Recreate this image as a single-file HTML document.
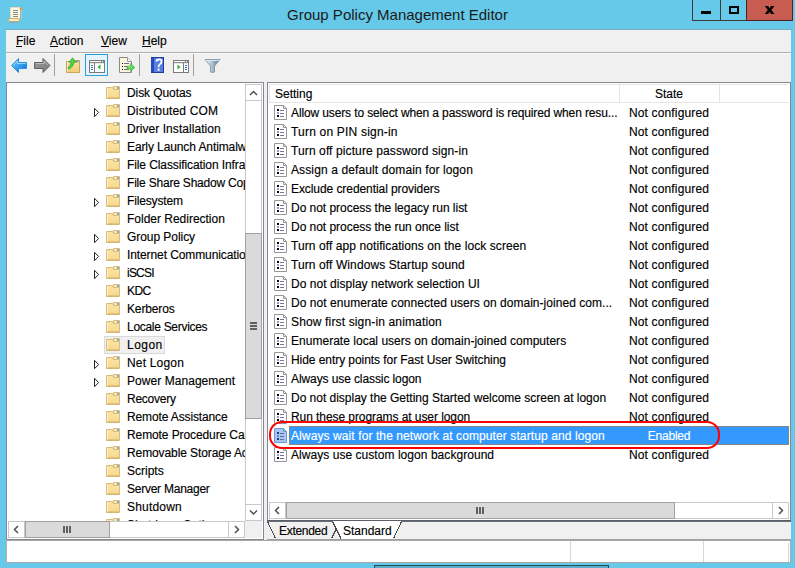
<!DOCTYPE html>
<html><head><meta charset="utf-8">
<style>
*{margin:0;padding:0;box-sizing:border-box}
html,body{width:795px;height:568px;overflow:hidden}
body{background:#67c9e9;position:relative;font-family:"Liberation Sans",sans-serif;font-size:12px;color:#000;-webkit-text-stroke:0.15px}
.a{position:absolute}
.t{position:absolute;white-space:nowrap;line-height:18px;height:18px}
.r{position:absolute;white-space:nowrap;line-height:19px;height:19px}
svg{position:absolute;overflow:visible}
</style></head><body>

<svg style="left:0;top:0" width="30" height="28" viewBox="0 0 30 28">
  <path d="M10.5 7.5 h9.5 l1 1 v10 h-10.5 z" fill="#fdf8e2" stroke="#e6dcc0"/>
  <path d="M20.5 8.5 v10.5" stroke="#a8a8a8"/>
  <circle cx="21" cy="9" r="1.4" fill="#d8a040"/>
  <rect x="13" y="10" width="5" height="1" fill="#8a8a98"/>
  <rect x="13" y="12" width="5" height="1" fill="#8a8a98"/>
  <rect x="13" y="14" width="5" height="1" fill="#8a8a98"/>
  <rect x="13" y="16" width="5" height="1" fill="#8a8a98"/>
  <rect x="8.5" y="18.5" width="11" height="3" rx="1.5" fill="#faf0c8" stroke="#d0b068"/>
  <path d="M9 22 h10" stroke="#a0a0a0"/>
</svg>
<div class="a" style="left:0;top:5px;width:795px;text-align:center;font-size:15px;line-height:20px;height:20px;color:#1a1a1a;white-space:nowrap;-webkit-text-stroke:0">Group Policy Management Editor</div>

<div class="a" style="left:692px;top:0;width:29px;height:21px;border:1px solid #3a3a3a;border-top:none"></div>
<div class="a" style="left:701px;top:11px;width:10px;height:3px;background:#000"></div>
<div class="a" style="left:720px;top:0;width:27px;height:21px;border-bottom:1px solid #3a3a3a"></div>
<div class="a" style="left:729px;top:6px;width:10px;height:8px;border:2px solid #000"></div>
<div class="a" style="left:746px;top:0;width:47px;height:21px;border:1px solid #4a2420;border-top:none;background:#c75c50"></div>
<svg style="left:0;top:0" width="795" height="30" viewBox="0 0 795 30"><path d="M764.8 6 H768.2 L769.6 8.3 L771 6 H774.4 L771.4 10 L774.4 14 H771 L769.6 11.7 L768.2 14 H764.8 L767.8 10 Z" fill="#000"/></svg>

<div class="a" style="left:5px;top:29px;width:787px;height:1px;background:#7aaac4"></div>
<div class="a" style="left:6px;top:30px;width:785px;height:533px;background:#f0f0f0"></div>
<div class="t" style="left:16px;top:32px">File</div>
<div class="a" style="left:16px;top:46px;width:6px;height:1px;background:#000"></div>
<div class="t" style="left:50px;top:32px">Action</div>
<div class="a" style="left:50px;top:46px;width:8px;height:1px;background:#000"></div>
<div class="t" style="left:101px;top:32px">View</div>
<div class="a" style="left:101px;top:46px;width:8px;height:1px;background:#000"></div>
<div class="t" style="left:142px;top:32px">Help</div>
<div class="a" style="left:142px;top:46px;width:9px;height:1px;background:#000"></div>
<div class="a" style="left:6px;top:52px;width:785px;height:1px;background:#b0b0b0"></div>
<div class="a" style="left:6px;top:53px;width:785px;height:1px;background:#fafbfd"></div>
<div class="a" style="left:54px;top:54px;width:1px;height:22px;background:#a0a0a0"></div>
<div class="a" style="left:139px;top:54px;width:1px;height:22px;background:#a0a0a0"></div>
<div class="a" style="left:193px;top:54px;width:1px;height:22px;background:#a0a0a0"></div>
<svg style="left:0;top:0" width="230" height="82" viewBox="0 0 230 82">
<defs>
 <linearGradient id="gb" x1="0" y1="0" x2="1" y2="1"><stop offset="0" stop-color="#7ad4ff"/><stop offset="0.6" stop-color="#2a9ae8"/><stop offset="1" stop-color="#0c6ad8"/></linearGradient>
 <linearGradient id="gg" x1="0" y1="0" x2="1" y2="1"><stop offset="0" stop-color="#9a9a9a"/><stop offset="1" stop-color="#7a7a7a"/></linearGradient>
 <linearGradient id="gf" x1="0" y1="0" x2="0" y2="1"><stop offset="0" stop-color="#f8e2a0"/><stop offset="1" stop-color="#f0cc78"/></linearGradient>
 <linearGradient id="gfun" x1="0" y1="0" x2="1" y2="0"><stop offset="0" stop-color="#eef3f8"/><stop offset="0.45" stop-color="#b4c4d2"/><stop offset="1" stop-color="#4e6a80"/></linearGradient>
</defs>
<path d="M11.5 65.5 L18.5 58.5 V62.5 H26.5 V68.5 H18.5 V72.5 Z" fill="url(#gb)" stroke="#2c8edc" stroke-linejoin="round"/><path d="M13.2 65.5 L17.5 61 V63.5 H25.5" fill="none" stroke="#a8e2ff" stroke-width="0.8"/>
<path d="M50 65.5 L43 58.5 V62.5 H34.5 V68.5 H43 V72.5 Z" fill="url(#gg)" stroke="#606060" stroke-linejoin="round"/><path d="M48.3 65.5 L44 61 V63.5 H35.5" fill="none" stroke="#c8c8c8" stroke-width="0.8"/>
<!-- up folder -->
<path d="M66.5 61.5 h7 l1 -1 h5 v12 h-13 z" fill="url(#gf)" stroke="#c9a458"/>
<path d="M67.5 62.5 v9" stroke="#fff3c4"/>
<rect x="76" y="61" width="2.5" height="1.2" fill="#4a98f0"/>
<path d="M72.5 57.8 L76 62.2 H74 C73.6 65.2 71.6 67.8 68.8 69.2 L67.8 67.6 C69.8 66.4 71 64.6 71.2 62.2 H69 Z" fill="#48d848" stroke="#2e9e2e" stroke-width="0.7" stroke-linejoin="round"/>
<!-- highlighted button -->
<rect x="85.5" y="54.5" width="22" height="21" fill="#e5f3ff" stroke="#26a0da"/>
<rect x="89.5" y="60.5" width="15" height="12" fill="#fff" stroke="#7a7a7a"/>
<rect x="90" y="61" width="14" height="1" fill="#fff"/>
<rect x="90" y="62" width="14" height="1" fill="#8a8a8a"/>
<rect x="101" y="61" width="1" height="1" fill="#7a7a7a"/><rect x="103" y="61" width="1" height="1" fill="#7a7a7a"/>
<rect x="90" y="63" width="14" height="1" fill="#e8e8e8"/>
<rect x="94" y="63" width="1" height="9" fill="#7a7a7a"/>
<rect x="91" y="65" width="2" height="1" fill="#3070c8"/><rect x="91" y="67" width="2" height="1" fill="#3070c8"/><rect x="91" y="69" width="2" height="1" fill="#3070c8"/>
<path d="M97.5 67 L100.5 64.5 V69.5 Z" fill="#30b030"/>
<!-- export list -->
<path d="M119.5 57.5 h8 l4 4 v11 h-12 z" fill="#fdf6dc" stroke="#8a8a8a"/><path d="M127.5 57.5 v4 h4" fill="#fff" stroke="#9a9a9a"/>
<rect x="122" y="63" width="1" height="1" fill="#000"/><rect x="122" y="66" width="1" height="1" fill="#000"/><rect x="122" y="69" width="1" height="1" fill="#000"/>
<rect x="124" y="63" width="5" height="1" fill="#6a6aa0"/><rect x="124" y="66" width="5" height="1" fill="#6a6aa0"/><rect x="124" y="69" width="5" height="1" fill="#6a6aa0"/>
<path d="M127 66 h3.5 v-2.6 l4.4 4 l-4.4 4 v-2.6 h-3.5 z" fill="#52d452" stroke="#36b036" stroke-width="0.6"/><path d="M128 67 h4" stroke="#a8f0a8" stroke-width="0.8"/>
<!-- help -->
<rect x="151" y="57" width="13" height="16" fill="#1e3c9e"/>
<rect x="151" y="58" width="3" height="14" fill="#2848c0"/>
<rect x="154" y="58" width="9" height="14" fill="#5a7ee0"/>
<path d="M156.4 61.6 Q156.6 59.3 159 59.3 Q161.6 59.3 161.6 61.6 Q161.6 63.2 159.8 64.4 Q158.6 65.3 158.6 67.2" fill="none" stroke="#fff" stroke-width="1.7"/>
<rect x="157.6" y="68.6" width="2" height="2" fill="#fff"/>
<!-- action pane -->
<rect x="173.5" y="60.5" width="15" height="12" fill="#fff" stroke="#7a7a7a"/>
<rect x="174" y="62" width="14" height="1" fill="#8a8a8a"/>
<rect x="185" y="61" width="1" height="1" fill="#7a7a7a"/><rect x="187" y="61" width="1" height="1" fill="#7a7a7a"/>
<rect x="174" y="63" width="14" height="1" fill="#e8e8e8"/>
<rect x="183" y="63" width="1" height="9" fill="#7a7a7a"/>
<rect x="185" y="65" width="2" height="1" fill="#3070c8"/><rect x="185" y="67" width="2" height="1" fill="#3070c8"/><rect x="185" y="69" width="2" height="1" fill="#3070c8"/>
<path d="M177.5 64.5 L180.5 67 L177.5 69.5 Z" fill="#30b030"/>
<!-- filter -->
<path d="M205 59.5 H220 L214.5 66 V72 Q212.5 73 210.5 72 V66 Z" fill="url(#gfun)" stroke="#7890a4" stroke-width="0.8"/><path d="M206 60.5 H219" stroke="#dce6ee" stroke-width="1"/>
</svg>

<div class="a" style="left:6px;top:82px;width:258px;height:458px;border:1px solid #828790;background:#fff"></div>
<svg width="0" height="0" style="left:0;top:0"><defs><linearGradient id="fld" x1="0" y1="0" x2="0" y2="1"><stop offset="0" stop-color="#fbe6a6"/><stop offset="1" stop-color="#f5d78e"/></linearGradient></defs></svg>
<div class="a" style="left:8px;top:84px;width:237px;height:437px;overflow:hidden">
<svg style="left:98px;top:2px" width="14" height="13" viewBox="0 0 14 13"><path d="M0.5 1.5 H6.5 L7.5 3.5 H13.5 V12.5 H0.5 Z" fill="url(#fld)" stroke="#dcbd78"/><path d="M7.5 0.5 H13.5 V3.5 H7.5 Z" fill="#f6d98a" stroke="#dcbd78"/><rect x="8.5" y="1.3" width="2.5" height="1.4" fill="#fffbea"/><rect x="10.8" y="1.3" width="2" height="1.4" fill="#4a94ec"/><path d="M1 12 H13" stroke="#cfae68"/><path d="M1.5 2.5 V11.5" stroke="#fff2c8" stroke-width="1"/></svg>
<div class="t" style="left:119px;top:0px;letter-spacing:-0.080px">Disk Quotas</div>
<svg style="left:86px;top:24px" width="6" height="10" viewBox="0 0 6 10"><path d="M0.5 0.3 V8.7 L4.6 4.5 Z" fill="#fff" stroke="#262626" stroke-width="1"/></svg>
<svg style="left:98px;top:20px" width="14" height="13" viewBox="0 0 14 13"><path d="M0.5 1.5 H6.5 L7.5 3.5 H13.5 V12.5 H0.5 Z" fill="url(#fld)" stroke="#dcbd78"/><path d="M7.5 0.5 H13.5 V3.5 H7.5 Z" fill="#f6d98a" stroke="#dcbd78"/><rect x="8.5" y="1.3" width="2.5" height="1.4" fill="#fffbea"/><rect x="10.8" y="1.3" width="2" height="1.4" fill="#4a94ec"/><path d="M1 12 H13" stroke="#cfae68"/><path d="M1.5 2.5 V11.5" stroke="#fff2c8" stroke-width="1"/></svg>
<div class="t" style="left:119px;top:18px;letter-spacing:0.164px">Distributed COM</div>
<svg style="left:98px;top:38px" width="14" height="13" viewBox="0 0 14 13"><path d="M0.5 1.5 H6.5 L7.5 3.5 H13.5 V12.5 H0.5 Z" fill="url(#fld)" stroke="#dcbd78"/><path d="M7.5 0.5 H13.5 V3.5 H7.5 Z" fill="#f6d98a" stroke="#dcbd78"/><rect x="8.5" y="1.3" width="2.5" height="1.4" fill="#fffbea"/><rect x="10.8" y="1.3" width="2" height="1.4" fill="#4a94ec"/><path d="M1 12 H13" stroke="#cfae68"/><path d="M1.5 2.5 V11.5" stroke="#fff2c8" stroke-width="1"/></svg>
<div class="t" style="left:119px;top:36px;letter-spacing:0.056px">Driver Installation</div>
<svg style="left:98px;top:56px" width="14" height="13" viewBox="0 0 14 13"><path d="M0.5 1.5 H6.5 L7.5 3.5 H13.5 V12.5 H0.5 Z" fill="url(#fld)" stroke="#dcbd78"/><path d="M7.5 0.5 H13.5 V3.5 H7.5 Z" fill="#f6d98a" stroke="#dcbd78"/><rect x="8.5" y="1.3" width="2.5" height="1.4" fill="#fffbea"/><rect x="10.8" y="1.3" width="2" height="1.4" fill="#4a94ec"/><path d="M1 12 H13" stroke="#cfae68"/><path d="M1.5 2.5 V11.5" stroke="#fff2c8" stroke-width="1"/></svg>
<div class="t" style="left:119px;top:54px;letter-spacing:-0.100px">Early Launch Antimalware</div>
<svg style="left:98px;top:74px" width="14" height="13" viewBox="0 0 14 13"><path d="M0.5 1.5 H6.5 L7.5 3.5 H13.5 V12.5 H0.5 Z" fill="url(#fld)" stroke="#dcbd78"/><path d="M7.5 0.5 H13.5 V3.5 H7.5 Z" fill="#f6d98a" stroke="#dcbd78"/><rect x="8.5" y="1.3" width="2.5" height="1.4" fill="#fffbea"/><rect x="10.8" y="1.3" width="2" height="1.4" fill="#4a94ec"/><path d="M1 12 H13" stroke="#cfae68"/><path d="M1.5 2.5 V11.5" stroke="#fff2c8" stroke-width="1"/></svg>
<div class="t" style="left:119px;top:72px;letter-spacing:-0.100px">File Classification Infrastructure</div>
<svg style="left:98px;top:92px" width="14" height="13" viewBox="0 0 14 13"><path d="M0.5 1.5 H6.5 L7.5 3.5 H13.5 V12.5 H0.5 Z" fill="url(#fld)" stroke="#dcbd78"/><path d="M7.5 0.5 H13.5 V3.5 H7.5 Z" fill="#f6d98a" stroke="#dcbd78"/><rect x="8.5" y="1.3" width="2.5" height="1.4" fill="#fffbea"/><rect x="10.8" y="1.3" width="2" height="1.4" fill="#4a94ec"/><path d="M1 12 H13" stroke="#cfae68"/><path d="M1.5 2.5 V11.5" stroke="#fff2c8" stroke-width="1"/></svg>
<div class="t" style="left:119px;top:90px;letter-spacing:-0.200px">File Share Shadow Copy Provider</div>
<svg style="left:86px;top:114px" width="6" height="10" viewBox="0 0 6 10"><path d="M0.5 0.3 V8.7 L4.6 4.5 Z" fill="#fff" stroke="#262626" stroke-width="1"/></svg>
<svg style="left:98px;top:110px" width="14" height="13" viewBox="0 0 14 13"><path d="M0.5 1.5 H6.5 L7.5 3.5 H13.5 V12.5 H0.5 Z" fill="url(#fld)" stroke="#dcbd78"/><path d="M7.5 0.5 H13.5 V3.5 H7.5 Z" fill="#f6d98a" stroke="#dcbd78"/><rect x="8.5" y="1.3" width="2.5" height="1.4" fill="#fffbea"/><rect x="10.8" y="1.3" width="2" height="1.4" fill="#4a94ec"/><path d="M1 12 H13" stroke="#cfae68"/><path d="M1.5 2.5 V11.5" stroke="#fff2c8" stroke-width="1"/></svg>
<div class="t" style="left:119px;top:108px;letter-spacing:-0.144px">Filesystem</div>
<svg style="left:98px;top:128px" width="14" height="13" viewBox="0 0 14 13"><path d="M0.5 1.5 H6.5 L7.5 3.5 H13.5 V12.5 H0.5 Z" fill="url(#fld)" stroke="#dcbd78"/><path d="M7.5 0.5 H13.5 V3.5 H7.5 Z" fill="#f6d98a" stroke="#dcbd78"/><rect x="8.5" y="1.3" width="2.5" height="1.4" fill="#fffbea"/><rect x="10.8" y="1.3" width="2" height="1.4" fill="#4a94ec"/><path d="M1 12 H13" stroke="#cfae68"/><path d="M1.5 2.5 V11.5" stroke="#fff2c8" stroke-width="1"/></svg>
<div class="t" style="left:119px;top:126px;letter-spacing:-0.012px">Folder Redirection</div>
<svg style="left:86px;top:150px" width="6" height="10" viewBox="0 0 6 10"><path d="M0.5 0.3 V8.7 L4.6 4.5 Z" fill="#fff" stroke="#262626" stroke-width="1"/></svg>
<svg style="left:98px;top:146px" width="14" height="13" viewBox="0 0 14 13"><path d="M0.5 1.5 H6.5 L7.5 3.5 H13.5 V12.5 H0.5 Z" fill="url(#fld)" stroke="#dcbd78"/><path d="M7.5 0.5 H13.5 V3.5 H7.5 Z" fill="#f6d98a" stroke="#dcbd78"/><rect x="8.5" y="1.3" width="2.5" height="1.4" fill="#fffbea"/><rect x="10.8" y="1.3" width="2" height="1.4" fill="#4a94ec"/><path d="M1 12 H13" stroke="#cfae68"/><path d="M1.5 2.5 V11.5" stroke="#fff2c8" stroke-width="1"/></svg>
<div class="t" style="left:119px;top:144px;letter-spacing:-0.055px">Group Policy</div>
<svg style="left:86px;top:168px" width="6" height="10" viewBox="0 0 6 10"><path d="M0.5 0.3 V8.7 L4.6 4.5 Z" fill="#fff" stroke="#262626" stroke-width="1"/></svg>
<svg style="left:98px;top:164px" width="14" height="13" viewBox="0 0 14 13"><path d="M0.5 1.5 H6.5 L7.5 3.5 H13.5 V12.5 H0.5 Z" fill="url(#fld)" stroke="#dcbd78"/><path d="M7.5 0.5 H13.5 V3.5 H7.5 Z" fill="#f6d98a" stroke="#dcbd78"/><rect x="8.5" y="1.3" width="2.5" height="1.4" fill="#fffbea"/><rect x="10.8" y="1.3" width="2" height="1.4" fill="#4a94ec"/><path d="M1 12 H13" stroke="#cfae68"/><path d="M1.5 2.5 V11.5" stroke="#fff2c8" stroke-width="1"/></svg>
<div class="t" style="left:119px;top:162px;letter-spacing:-0.100px">Internet Communication Management</div>
<svg style="left:86px;top:186px" width="6" height="10" viewBox="0 0 6 10"><path d="M0.5 0.3 V8.7 L4.6 4.5 Z" fill="#fff" stroke="#262626" stroke-width="1"/></svg>
<svg style="left:98px;top:182px" width="14" height="13" viewBox="0 0 14 13"><path d="M0.5 1.5 H6.5 L7.5 3.5 H13.5 V12.5 H0.5 Z" fill="url(#fld)" stroke="#dcbd78"/><path d="M7.5 0.5 H13.5 V3.5 H7.5 Z" fill="#f6d98a" stroke="#dcbd78"/><rect x="8.5" y="1.3" width="2.5" height="1.4" fill="#fffbea"/><rect x="10.8" y="1.3" width="2" height="1.4" fill="#4a94ec"/><path d="M1 12 H13" stroke="#cfae68"/><path d="M1.5 2.5 V11.5" stroke="#fff2c8" stroke-width="1"/></svg>
<div class="t" style="left:119px;top:180px;letter-spacing:-0.775px">iSCSI</div>
<svg style="left:98px;top:200px" width="14" height="13" viewBox="0 0 14 13"><path d="M0.5 1.5 H6.5 L7.5 3.5 H13.5 V12.5 H0.5 Z" fill="url(#fld)" stroke="#dcbd78"/><path d="M7.5 0.5 H13.5 V3.5 H7.5 Z" fill="#f6d98a" stroke="#dcbd78"/><rect x="8.5" y="1.3" width="2.5" height="1.4" fill="#fffbea"/><rect x="10.8" y="1.3" width="2" height="1.4" fill="#4a94ec"/><path d="M1 12 H13" stroke="#cfae68"/><path d="M1.5 2.5 V11.5" stroke="#fff2c8" stroke-width="1"/></svg>
<div class="t" style="left:119px;top:198px;letter-spacing:-0.550px">KDC</div>
<svg style="left:98px;top:218px" width="14" height="13" viewBox="0 0 14 13"><path d="M0.5 1.5 H6.5 L7.5 3.5 H13.5 V12.5 H0.5 Z" fill="url(#fld)" stroke="#dcbd78"/><path d="M7.5 0.5 H13.5 V3.5 H7.5 Z" fill="#f6d98a" stroke="#dcbd78"/><rect x="8.5" y="1.3" width="2.5" height="1.4" fill="#fffbea"/><rect x="10.8" y="1.3" width="2" height="1.4" fill="#4a94ec"/><path d="M1 12 H13" stroke="#cfae68"/><path d="M1.5 2.5 V11.5" stroke="#fff2c8" stroke-width="1"/></svg>
<div class="t" style="left:119px;top:216px;letter-spacing:-0.143px">Kerberos</div>
<svg style="left:98px;top:236px" width="14" height="13" viewBox="0 0 14 13"><path d="M0.5 1.5 H6.5 L7.5 3.5 H13.5 V12.5 H0.5 Z" fill="url(#fld)" stroke="#dcbd78"/><path d="M7.5 0.5 H13.5 V3.5 H7.5 Z" fill="#f6d98a" stroke="#dcbd78"/><rect x="8.5" y="1.3" width="2.5" height="1.4" fill="#fffbea"/><rect x="10.8" y="1.3" width="2" height="1.4" fill="#4a94ec"/><path d="M1 12 H13" stroke="#cfae68"/><path d="M1.5 2.5 V11.5" stroke="#fff2c8" stroke-width="1"/></svg>
<div class="t" style="left:119px;top:234px;letter-spacing:-0.293px">Locale Services</div>
<div class="a" style="left:96px;top:252px;width:61px;height:18px;background:#f0f0f0;border:1px solid #dadada"></div>
<svg style="left:98px;top:254px" width="14" height="13" viewBox="0 0 14 13"><path d="M0.5 1.5 H6.5 L7.5 3.5 H13.5 V12.5 H0.5 Z" fill="url(#fld)" stroke="#dcbd78"/><path d="M7.5 0.5 H13.5 V3.5 H7.5 Z" fill="#f6d98a" stroke="#dcbd78"/><rect x="8.5" y="1.3" width="2.5" height="1.4" fill="#fffbea"/><rect x="10.8" y="1.3" width="2" height="1.4" fill="#4a94ec"/><path d="M1 12 H13" stroke="#cfae68"/><path d="M1.5 2.5 V11.5" stroke="#fff2c8" stroke-width="1"/></svg>
<div class="t" style="left:119px;top:252px;letter-spacing:0.475px">Logon</div>
<svg style="left:86px;top:276px" width="6" height="10" viewBox="0 0 6 10"><path d="M0.5 0.3 V8.7 L4.6 4.5 Z" fill="#fff" stroke="#262626" stroke-width="1"/></svg>
<svg style="left:98px;top:272px" width="14" height="13" viewBox="0 0 14 13"><path d="M0.5 1.5 H6.5 L7.5 3.5 H13.5 V12.5 H0.5 Z" fill="url(#fld)" stroke="#dcbd78"/><path d="M7.5 0.5 H13.5 V3.5 H7.5 Z" fill="#f6d98a" stroke="#dcbd78"/><rect x="8.5" y="1.3" width="2.5" height="1.4" fill="#fffbea"/><rect x="10.8" y="1.3" width="2" height="1.4" fill="#4a94ec"/><path d="M1 12 H13" stroke="#cfae68"/><path d="M1.5 2.5 V11.5" stroke="#fff2c8" stroke-width="1"/></svg>
<div class="t" style="left:119px;top:270px;letter-spacing:0.188px">Net Logon</div>
<svg style="left:86px;top:294px" width="6" height="10" viewBox="0 0 6 10"><path d="M0.5 0.3 V8.7 L4.6 4.5 Z" fill="#fff" stroke="#262626" stroke-width="1"/></svg>
<svg style="left:98px;top:290px" width="14" height="13" viewBox="0 0 14 13"><path d="M0.5 1.5 H6.5 L7.5 3.5 H13.5 V12.5 H0.5 Z" fill="url(#fld)" stroke="#dcbd78"/><path d="M7.5 0.5 H13.5 V3.5 H7.5 Z" fill="#f6d98a" stroke="#dcbd78"/><rect x="8.5" y="1.3" width="2.5" height="1.4" fill="#fffbea"/><rect x="10.8" y="1.3" width="2" height="1.4" fill="#4a94ec"/><path d="M1 12 H13" stroke="#cfae68"/><path d="M1.5 2.5 V11.5" stroke="#fff2c8" stroke-width="1"/></svg>
<div class="t" style="left:119px;top:288px;letter-spacing:0.053px">Power Management</div>
<svg style="left:98px;top:308px" width="14" height="13" viewBox="0 0 14 13"><path d="M0.5 1.5 H6.5 L7.5 3.5 H13.5 V12.5 H0.5 Z" fill="url(#fld)" stroke="#dcbd78"/><path d="M7.5 0.5 H13.5 V3.5 H7.5 Z" fill="#f6d98a" stroke="#dcbd78"/><rect x="8.5" y="1.3" width="2.5" height="1.4" fill="#fffbea"/><rect x="10.8" y="1.3" width="2" height="1.4" fill="#4a94ec"/><path d="M1 12 H13" stroke="#cfae68"/><path d="M1.5 2.5 V11.5" stroke="#fff2c8" stroke-width="1"/></svg>
<div class="t" style="left:119px;top:306px;letter-spacing:-0.243px">Recovery</div>
<svg style="left:98px;top:326px" width="14" height="13" viewBox="0 0 14 13"><path d="M0.5 1.5 H6.5 L7.5 3.5 H13.5 V12.5 H0.5 Z" fill="url(#fld)" stroke="#dcbd78"/><path d="M7.5 0.5 H13.5 V3.5 H7.5 Z" fill="#f6d98a" stroke="#dcbd78"/><rect x="8.5" y="1.3" width="2.5" height="1.4" fill="#fffbea"/><rect x="10.8" y="1.3" width="2" height="1.4" fill="#4a94ec"/><path d="M1 12 H13" stroke="#cfae68"/><path d="M1.5 2.5 V11.5" stroke="#fff2c8" stroke-width="1"/></svg>
<div class="t" style="left:119px;top:324px;letter-spacing:-0.131px">Remote Assistance</div>
<svg style="left:98px;top:344px" width="14" height="13" viewBox="0 0 14 13"><path d="M0.5 1.5 H6.5 L7.5 3.5 H13.5 V12.5 H0.5 Z" fill="url(#fld)" stroke="#dcbd78"/><path d="M7.5 0.5 H13.5 V3.5 H7.5 Z" fill="#f6d98a" stroke="#dcbd78"/><rect x="8.5" y="1.3" width="2.5" height="1.4" fill="#fffbea"/><rect x="10.8" y="1.3" width="2" height="1.4" fill="#4a94ec"/><path d="M1 12 H13" stroke="#cfae68"/><path d="M1.5 2.5 V11.5" stroke="#fff2c8" stroke-width="1"/></svg>
<div class="t" style="left:119px;top:342px;letter-spacing:-0.100px">Remote Procedure Call</div>
<svg style="left:98px;top:362px" width="14" height="13" viewBox="0 0 14 13"><path d="M0.5 1.5 H6.5 L7.5 3.5 H13.5 V12.5 H0.5 Z" fill="url(#fld)" stroke="#dcbd78"/><path d="M7.5 0.5 H13.5 V3.5 H7.5 Z" fill="#f6d98a" stroke="#dcbd78"/><rect x="8.5" y="1.3" width="2.5" height="1.4" fill="#fffbea"/><rect x="10.8" y="1.3" width="2" height="1.4" fill="#4a94ec"/><path d="M1 12 H13" stroke="#cfae68"/><path d="M1.5 2.5 V11.5" stroke="#fff2c8" stroke-width="1"/></svg>
<div class="t" style="left:119px;top:360px;letter-spacing:-0.100px">Removable Storage Access</div>
<svg style="left:98px;top:380px" width="14" height="13" viewBox="0 0 14 13"><path d="M0.5 1.5 H6.5 L7.5 3.5 H13.5 V12.5 H0.5 Z" fill="url(#fld)" stroke="#dcbd78"/><path d="M7.5 0.5 H13.5 V3.5 H7.5 Z" fill="#f6d98a" stroke="#dcbd78"/><rect x="8.5" y="1.3" width="2.5" height="1.4" fill="#fffbea"/><rect x="10.8" y="1.3" width="2" height="1.4" fill="#4a94ec"/><path d="M1 12 H13" stroke="#cfae68"/><path d="M1.5 2.5 V11.5" stroke="#fff2c8" stroke-width="1"/></svg>
<div class="t" style="left:119px;top:378px;letter-spacing:0.000px">Scripts</div>
<svg style="left:98px;top:398px" width="14" height="13" viewBox="0 0 14 13"><path d="M0.5 1.5 H6.5 L7.5 3.5 H13.5 V12.5 H0.5 Z" fill="url(#fld)" stroke="#dcbd78"/><path d="M7.5 0.5 H13.5 V3.5 H7.5 Z" fill="#f6d98a" stroke="#dcbd78"/><rect x="8.5" y="1.3" width="2.5" height="1.4" fill="#fffbea"/><rect x="10.8" y="1.3" width="2" height="1.4" fill="#4a94ec"/><path d="M1 12 H13" stroke="#cfae68"/><path d="M1.5 2.5 V11.5" stroke="#fff2c8" stroke-width="1"/></svg>
<div class="t" style="left:119px;top:396px;letter-spacing:-0.246px">Server Manager</div>
<svg style="left:98px;top:416px" width="14" height="13" viewBox="0 0 14 13"><path d="M0.5 1.5 H6.5 L7.5 3.5 H13.5 V12.5 H0.5 Z" fill="url(#fld)" stroke="#dcbd78"/><path d="M7.5 0.5 H13.5 V3.5 H7.5 Z" fill="#f6d98a" stroke="#dcbd78"/><rect x="8.5" y="1.3" width="2.5" height="1.4" fill="#fffbea"/><rect x="10.8" y="1.3" width="2" height="1.4" fill="#4a94ec"/><path d="M1 12 H13" stroke="#cfae68"/><path d="M1.5 2.5 V11.5" stroke="#fff2c8" stroke-width="1"/></svg>
<div class="t" style="left:119px;top:414px;letter-spacing:0.186px">Shutdown</div>
<svg style="left:98px;top:434px" width="14" height="13" viewBox="0 0 14 13"><path d="M0.5 1.5 H6.5 L7.5 3.5 H13.5 V12.5 H0.5 Z" fill="url(#fld)" stroke="#dcbd78"/><path d="M7.5 0.5 H13.5 V3.5 H7.5 Z" fill="#f6d98a" stroke="#dcbd78"/><rect x="8.5" y="1.3" width="2.5" height="1.4" fill="#fffbea"/><rect x="10.8" y="1.3" width="2" height="1.4" fill="#4a94ec"/><path d="M1 12 H13" stroke="#cfae68"/><path d="M1.5 2.5 V11.5" stroke="#fff2c8" stroke-width="1"/></svg>
<div class="t" style="left:119px;top:432px;letter-spacing:-0.100px">Shutdown Options</div>
</div>
<div class="a" style="left:245px;top:84px;width:17px;height:437px;background:#fff;border-left:1px solid #c8c8c8;border-right:1px solid #c8c8c8"></div>
<div class="a" style="left:245px;top:84px;width:17px;height:17px;border:1px solid #c8c8c8;background:#fff"></div>
<svg style="left:245px;top:84px" width="17" height="17" viewBox="0 0 17 17"><path d="M5 11 L8.5 7.5 L12 11" fill="none" stroke="#505050" stroke-width="1.5"/></svg>
<div class="a" style="left:245px;top:504px;width:17px;height:17px;border:1px solid #c8c8c8;background:#fff"></div>
<svg style="left:245px;top:504px" width="17" height="17" viewBox="0 0 17 17"><path d="M5 6.5 L8.5 10 L12 6.5" fill="none" stroke="#505050" stroke-width="1.5"/></svg>
<div class="a" style="left:245px;top:233px;width:17px;height:186px;border:1px solid #a0a0a0;background:#dadada"></div>
<div class="a" style="left:250px;top:322px;width:7px;height:2px;background:#606060"></div>
<div class="a" style="left:250px;top:325px;width:7px;height:2px;background:#606060"></div>
<div class="a" style="left:250px;top:328px;width:7px;height:2px;background:#606060"></div>
<div class="a" style="left:8px;top:521px;width:237px;height:17px;background:#fff;border-top:1px solid #c8c8c8;border-bottom:1px solid #c8c8c8"></div>
<div class="a" style="left:8px;top:521px;width:17px;height:17px;border:1px solid #c8c8c8;background:#fff"></div>
<svg style="left:8px;top:521px" width="17" height="17" viewBox="0 0 17 17"><path d="M10 5 L6.5 8.5 L10 12" fill="none" stroke="#505050" stroke-width="1.5"/></svg>
<div class="a" style="left:228px;top:521px;width:17px;height:17px;border:1px solid #c8c8c8;background:#fff"></div>
<svg style="left:228px;top:521px" width="17" height="17" viewBox="0 0 17 17"><path d="M7 5 L10.5 8.5 L7 12" fill="none" stroke="#505050" stroke-width="1.5"/></svg>
<div class="a" style="left:25px;top:521px;width:85px;height:17px;border:1px solid #a0a0a0;background:#dadada"></div>
<div class="a" style="left:63px;top:526px;width:2px;height:7px;background:#606060"></div>
<div class="a" style="left:66px;top:526px;width:2px;height:7px;background:#606060"></div>
<div class="a" style="left:69px;top:526px;width:2px;height:7px;background:#606060"></div>
<div class="a" style="left:245px;top:521px;width:17px;height:17px;background:#f0f0f0"></div>
<div class="a" style="left:267px;top:82px;width:524px;height:439px;border:1px solid #828790;background:#fff"></div>
<div class="a" style="left:269px;top:84px;width:520px;height:19px;border-top:1px solid #e5e5e5;border-left:1px solid #e5e5e5;border-bottom:1px solid #e5e5e5;background:#fff"></div>
<div class="a" style="left:619px;top:84px;width:1px;height:18px;background:#e5e5e5"></div>
<div class="a" style="left:719px;top:84px;width:1px;height:18px;background:#e5e5e5"></div>
<div class="t" style="left:275px;top:85px">Setting</div>
<div class="t" style="left:619px;top:85px;width:100px;text-align:center">State</div>
<svg style="left:274px;top:105px" width="13" height="15" viewBox="0 0 13 15"><path d="M0.5 0.5 h9 l3 3 v11 h-12 z" fill="#fff" stroke="#969696"/><path d="M9.5 0.5 v3 h3" fill="none" stroke="#969696"/><rect x="3" y="4" width="2" height="2" fill="#000"/><rect x="3" y="7" width="2" height="2" fill="#9a9ac0"/><rect x="3" y="10" width="2" height="2" fill="#000"/><rect x="6" y="5" width="4" height="1" fill="#7676a6"/><rect x="6" y="8" width="4" height="1" fill="#7676a6"/><rect x="6" y="11" width="4" height="1" fill="#7676a6"/></svg>
<div class="r" style="left:291px;top:104px;color:#000;letter-spacing:-0.126px">Allow users to select when a password is required when resu...</div>
<div class="r" style="left:619px;top:104px;width:100px;text-align:center;color:#000;letter-spacing:0.15px">Not configured</div>
<svg style="left:274px;top:124px" width="13" height="15" viewBox="0 0 13 15"><path d="M0.5 0.5 h9 l3 3 v11 h-12 z" fill="#fff" stroke="#969696"/><path d="M9.5 0.5 v3 h3" fill="none" stroke="#969696"/><rect x="3" y="4" width="2" height="2" fill="#000"/><rect x="3" y="7" width="2" height="2" fill="#9a9ac0"/><rect x="3" y="10" width="2" height="2" fill="#000"/><rect x="6" y="5" width="4" height="1" fill="#7676a6"/><rect x="6" y="8" width="4" height="1" fill="#7676a6"/><rect x="6" y="11" width="4" height="1" fill="#7676a6"/></svg>
<div class="r" style="left:291px;top:123px;color:#000;letter-spacing:0.200px">Turn on PIN sign-in</div>
<div class="r" style="left:619px;top:123px;width:100px;text-align:center;color:#000;letter-spacing:0.15px">Not configured</div>
<svg style="left:274px;top:143px" width="13" height="15" viewBox="0 0 13 15"><path d="M0.5 0.5 h9 l3 3 v11 h-12 z" fill="#fff" stroke="#969696"/><path d="M9.5 0.5 v3 h3" fill="none" stroke="#969696"/><rect x="3" y="4" width="2" height="2" fill="#000"/><rect x="3" y="7" width="2" height="2" fill="#9a9ac0"/><rect x="3" y="10" width="2" height="2" fill="#000"/><rect x="6" y="5" width="4" height="1" fill="#7676a6"/><rect x="6" y="8" width="4" height="1" fill="#7676a6"/><rect x="6" y="11" width="4" height="1" fill="#7676a6"/></svg>
<div class="r" style="left:291px;top:142px;color:#000;letter-spacing:0.109px">Turn off picture password sign-in</div>
<div class="r" style="left:619px;top:142px;width:100px;text-align:center;color:#000;letter-spacing:0.15px">Not configured</div>
<svg style="left:274px;top:162px" width="13" height="15" viewBox="0 0 13 15"><path d="M0.5 0.5 h9 l3 3 v11 h-12 z" fill="#fff" stroke="#969696"/><path d="M9.5 0.5 v3 h3" fill="none" stroke="#969696"/><rect x="3" y="4" width="2" height="2" fill="#000"/><rect x="3" y="7" width="2" height="2" fill="#9a9ac0"/><rect x="3" y="10" width="2" height="2" fill="#000"/><rect x="6" y="5" width="4" height="1" fill="#7676a6"/><rect x="6" y="8" width="4" height="1" fill="#7676a6"/><rect x="6" y="11" width="4" height="1" fill="#7676a6"/></svg>
<div class="r" style="left:291px;top:161px;color:#000;letter-spacing:0.116px">Assign a default domain for logon</div>
<div class="r" style="left:619px;top:161px;width:100px;text-align:center;color:#000;letter-spacing:0.15px">Not configured</div>
<svg style="left:274px;top:181px" width="13" height="15" viewBox="0 0 13 15"><path d="M0.5 0.5 h9 l3 3 v11 h-12 z" fill="#fff" stroke="#969696"/><path d="M9.5 0.5 v3 h3" fill="none" stroke="#969696"/><rect x="3" y="4" width="2" height="2" fill="#000"/><rect x="3" y="7" width="2" height="2" fill="#9a9ac0"/><rect x="3" y="10" width="2" height="2" fill="#000"/><rect x="6" y="5" width="4" height="1" fill="#7676a6"/><rect x="6" y="8" width="4" height="1" fill="#7676a6"/><rect x="6" y="11" width="4" height="1" fill="#7676a6"/></svg>
<div class="r" style="left:291px;top:180px;color:#000;letter-spacing:-0.074px">Exclude credential providers</div>
<div class="r" style="left:619px;top:180px;width:100px;text-align:center;color:#000;letter-spacing:0.15px">Not configured</div>
<svg style="left:274px;top:200px" width="13" height="15" viewBox="0 0 13 15"><path d="M0.5 0.5 h9 l3 3 v11 h-12 z" fill="#fff" stroke="#969696"/><path d="M9.5 0.5 v3 h3" fill="none" stroke="#969696"/><rect x="3" y="4" width="2" height="2" fill="#000"/><rect x="3" y="7" width="2" height="2" fill="#9a9ac0"/><rect x="3" y="10" width="2" height="2" fill="#000"/><rect x="6" y="5" width="4" height="1" fill="#7676a6"/><rect x="6" y="8" width="4" height="1" fill="#7676a6"/><rect x="6" y="11" width="4" height="1" fill="#7676a6"/></svg>
<div class="r" style="left:291px;top:199px;color:#000;letter-spacing:-0.030px">Do not process the legacy run list</div>
<div class="r" style="left:619px;top:199px;width:100px;text-align:center;color:#000;letter-spacing:0.15px">Not configured</div>
<svg style="left:274px;top:219px" width="13" height="15" viewBox="0 0 13 15"><path d="M0.5 0.5 h9 l3 3 v11 h-12 z" fill="#fff" stroke="#969696"/><path d="M9.5 0.5 v3 h3" fill="none" stroke="#969696"/><rect x="3" y="4" width="2" height="2" fill="#000"/><rect x="3" y="7" width="2" height="2" fill="#9a9ac0"/><rect x="3" y="10" width="2" height="2" fill="#000"/><rect x="6" y="5" width="4" height="1" fill="#7676a6"/><rect x="6" y="8" width="4" height="1" fill="#7676a6"/><rect x="6" y="11" width="4" height="1" fill="#7676a6"/></svg>
<div class="r" style="left:291px;top:218px;color:#000;letter-spacing:-0.032px">Do not process the run once list</div>
<div class="r" style="left:619px;top:218px;width:100px;text-align:center;color:#000;letter-spacing:0.15px">Not configured</div>
<svg style="left:274px;top:238px" width="13" height="15" viewBox="0 0 13 15"><path d="M0.5 0.5 h9 l3 3 v11 h-12 z" fill="#fff" stroke="#969696"/><path d="M9.5 0.5 v3 h3" fill="none" stroke="#969696"/><rect x="3" y="4" width="2" height="2" fill="#000"/><rect x="3" y="7" width="2" height="2" fill="#9a9ac0"/><rect x="3" y="10" width="2" height="2" fill="#000"/><rect x="6" y="5" width="4" height="1" fill="#7676a6"/><rect x="6" y="8" width="4" height="1" fill="#7676a6"/><rect x="6" y="11" width="4" height="1" fill="#7676a6"/></svg>
<div class="r" style="left:291px;top:237px;color:#000;letter-spacing:0.084px">Turn off app notifications on the lock screen</div>
<div class="r" style="left:619px;top:237px;width:100px;text-align:center;color:#000;letter-spacing:0.15px">Not configured</div>
<svg style="left:274px;top:257px" width="13" height="15" viewBox="0 0 13 15"><path d="M0.5 0.5 h9 l3 3 v11 h-12 z" fill="#fff" stroke="#969696"/><path d="M9.5 0.5 v3 h3" fill="none" stroke="#969696"/><rect x="3" y="4" width="2" height="2" fill="#000"/><rect x="3" y="7" width="2" height="2" fill="#9a9ac0"/><rect x="3" y="10" width="2" height="2" fill="#000"/><rect x="6" y="5" width="4" height="1" fill="#7676a6"/><rect x="6" y="8" width="4" height="1" fill="#7676a6"/><rect x="6" y="11" width="4" height="1" fill="#7676a6"/></svg>
<div class="r" style="left:291px;top:256px;color:#000;letter-spacing:0.100px">Turn off Windows Startup sound</div>
<div class="r" style="left:619px;top:256px;width:100px;text-align:center;color:#000;letter-spacing:0.15px">Not configured</div>
<svg style="left:274px;top:276px" width="13" height="15" viewBox="0 0 13 15"><path d="M0.5 0.5 h9 l3 3 v11 h-12 z" fill="#fff" stroke="#969696"/><path d="M9.5 0.5 v3 h3" fill="none" stroke="#969696"/><rect x="3" y="4" width="2" height="2" fill="#000"/><rect x="3" y="7" width="2" height="2" fill="#9a9ac0"/><rect x="3" y="10" width="2" height="2" fill="#000"/><rect x="6" y="5" width="4" height="1" fill="#7676a6"/><rect x="6" y="8" width="4" height="1" fill="#7676a6"/><rect x="6" y="11" width="4" height="1" fill="#7676a6"/></svg>
<div class="r" style="left:291px;top:275px;color:#000;letter-spacing:0.044px">Do not display network selection UI</div>
<div class="r" style="left:619px;top:275px;width:100px;text-align:center;color:#000;letter-spacing:0.15px">Not configured</div>
<svg style="left:274px;top:295px" width="13" height="15" viewBox="0 0 13 15"><path d="M0.5 0.5 h9 l3 3 v11 h-12 z" fill="#fff" stroke="#969696"/><path d="M9.5 0.5 v3 h3" fill="none" stroke="#969696"/><rect x="3" y="4" width="2" height="2" fill="#000"/><rect x="3" y="7" width="2" height="2" fill="#9a9ac0"/><rect x="3" y="10" width="2" height="2" fill="#000"/><rect x="6" y="5" width="4" height="1" fill="#7676a6"/><rect x="6" y="8" width="4" height="1" fill="#7676a6"/><rect x="6" y="11" width="4" height="1" fill="#7676a6"/></svg>
<div class="r" style="left:291px;top:294px;color:#000;letter-spacing:0.042px">Do not enumerate connected users on domain-joined com...</div>
<div class="r" style="left:619px;top:294px;width:100px;text-align:center;color:#000;letter-spacing:0.15px">Not configured</div>
<svg style="left:274px;top:314px" width="13" height="15" viewBox="0 0 13 15"><path d="M0.5 0.5 h9 l3 3 v11 h-12 z" fill="#fff" stroke="#969696"/><path d="M9.5 0.5 v3 h3" fill="none" stroke="#969696"/><rect x="3" y="4" width="2" height="2" fill="#000"/><rect x="3" y="7" width="2" height="2" fill="#9a9ac0"/><rect x="3" y="10" width="2" height="2" fill="#000"/><rect x="6" y="5" width="4" height="1" fill="#7676a6"/><rect x="6" y="8" width="4" height="1" fill="#7676a6"/><rect x="6" y="11" width="4" height="1" fill="#7676a6"/></svg>
<div class="r" style="left:291px;top:313px;color:#000;letter-spacing:0.148px">Show first sign-in animation</div>
<div class="r" style="left:619px;top:313px;width:100px;text-align:center;color:#000;letter-spacing:0.15px">Not configured</div>
<svg style="left:274px;top:333px" width="13" height="15" viewBox="0 0 13 15"><path d="M0.5 0.5 h9 l3 3 v11 h-12 z" fill="#fff" stroke="#969696"/><path d="M9.5 0.5 v3 h3" fill="none" stroke="#969696"/><rect x="3" y="4" width="2" height="2" fill="#000"/><rect x="3" y="7" width="2" height="2" fill="#9a9ac0"/><rect x="3" y="10" width="2" height="2" fill="#000"/><rect x="6" y="5" width="4" height="1" fill="#7676a6"/><rect x="6" y="8" width="4" height="1" fill="#7676a6"/><rect x="6" y="11" width="4" height="1" fill="#7676a6"/></svg>
<div class="r" style="left:291px;top:332px;color:#000;letter-spacing:0.021px">Enumerate local users on domain-joined computers</div>
<div class="r" style="left:619px;top:332px;width:100px;text-align:center;color:#000;letter-spacing:0.15px">Not configured</div>
<svg style="left:274px;top:352px" width="13" height="15" viewBox="0 0 13 15"><path d="M0.5 0.5 h9 l3 3 v11 h-12 z" fill="#fff" stroke="#969696"/><path d="M9.5 0.5 v3 h3" fill="none" stroke="#969696"/><rect x="3" y="4" width="2" height="2" fill="#000"/><rect x="3" y="7" width="2" height="2" fill="#9a9ac0"/><rect x="3" y="10" width="2" height="2" fill="#000"/><rect x="6" y="5" width="4" height="1" fill="#7676a6"/><rect x="6" y="8" width="4" height="1" fill="#7676a6"/><rect x="6" y="11" width="4" height="1" fill="#7676a6"/></svg>
<div class="r" style="left:291px;top:351px;color:#000;letter-spacing:-0.062px">Hide entry points for Fast User Switching</div>
<div class="r" style="left:619px;top:351px;width:100px;text-align:center;color:#000;letter-spacing:0.15px">Not configured</div>
<svg style="left:274px;top:371px" width="13" height="15" viewBox="0 0 13 15"><path d="M0.5 0.5 h9 l3 3 v11 h-12 z" fill="#fff" stroke="#969696"/><path d="M9.5 0.5 v3 h3" fill="none" stroke="#969696"/><rect x="3" y="4" width="2" height="2" fill="#000"/><rect x="3" y="7" width="2" height="2" fill="#9a9ac0"/><rect x="3" y="10" width="2" height="2" fill="#000"/><rect x="6" y="5" width="4" height="1" fill="#7676a6"/><rect x="6" y="8" width="4" height="1" fill="#7676a6"/><rect x="6" y="11" width="4" height="1" fill="#7676a6"/></svg>
<div class="r" style="left:291px;top:370px;color:#000;letter-spacing:-0.096px">Always use classic logon</div>
<div class="r" style="left:619px;top:370px;width:100px;text-align:center;color:#000;letter-spacing:0.15px">Not configured</div>
<svg style="left:274px;top:390px" width="13" height="15" viewBox="0 0 13 15"><path d="M0.5 0.5 h9 l3 3 v11 h-12 z" fill="#fff" stroke="#969696"/><path d="M9.5 0.5 v3 h3" fill="none" stroke="#969696"/><rect x="3" y="4" width="2" height="2" fill="#000"/><rect x="3" y="7" width="2" height="2" fill="#9a9ac0"/><rect x="3" y="10" width="2" height="2" fill="#000"/><rect x="6" y="5" width="4" height="1" fill="#7676a6"/><rect x="6" y="8" width="4" height="1" fill="#7676a6"/><rect x="6" y="11" width="4" height="1" fill="#7676a6"/></svg>
<div class="r" style="left:291px;top:389px;color:#000;letter-spacing:-0.019px">Do not display the Getting Started welcome screen at logon</div>
<div class="r" style="left:619px;top:389px;width:100px;text-align:center;color:#000;letter-spacing:0.15px">Not configured</div>
<svg style="left:274px;top:409px" width="13" height="15" viewBox="0 0 13 15"><path d="M0.5 0.5 h9 l3 3 v11 h-12 z" fill="#fff" stroke="#969696"/><path d="M9.5 0.5 v3 h3" fill="none" stroke="#969696"/><rect x="3" y="4" width="2" height="2" fill="#000"/><rect x="3" y="7" width="2" height="2" fill="#9a9ac0"/><rect x="3" y="10" width="2" height="2" fill="#000"/><rect x="6" y="5" width="4" height="1" fill="#7676a6"/><rect x="6" y="8" width="4" height="1" fill="#7676a6"/><rect x="6" y="11" width="4" height="1" fill="#7676a6"/></svg>
<div class="r" style="left:291px;top:408px;color:#000;letter-spacing:-0.071px">Run these programs at user logon</div>
<div class="r" style="left:619px;top:408px;width:100px;text-align:center;color:#000;letter-spacing:0.15px">Not configured</div>
<div class="a" style="left:289px;top:426px;width:500px;height:19px;background:#3399ff;border:1px dotted #d07820"></div>
<svg style="left:274px;top:428px" width="13" height="15" viewBox="0 0 13 15"><path d="M0.5 0.5 h9 l3 3 v11 h-12 z" fill="#a8c8f2" stroke="#6e98d0"/><path d="M9.5 0.5 v3 h3" fill="none" stroke="#6e98d0"/><rect x="3" y="4" width="2" height="2" fill="#1a3a78"/><rect x="3" y="7" width="2" height="2" fill="#7a8ac0"/><rect x="3" y="10" width="2" height="2" fill="#1a3a78"/><rect x="6" y="5" width="4" height="1" fill="#5a6aa8"/><rect x="6" y="8" width="4" height="1" fill="#5a6aa8"/><rect x="6" y="11" width="4" height="1" fill="#5a6aa8"/></svg>
<div class="r" style="left:291px;top:427px;color:#fff;letter-spacing:0.098px">Always wait for the network at computer startup and logon</div>
<div class="r" style="left:619px;top:427px;width:100px;text-align:center;color:#fff;letter-spacing:-0.2px">Enabled</div>
<svg style="left:274px;top:447px" width="13" height="15" viewBox="0 0 13 15"><path d="M0.5 0.5 h9 l3 3 v11 h-12 z" fill="#fff" stroke="#969696"/><path d="M9.5 0.5 v3 h3" fill="none" stroke="#969696"/><rect x="3" y="4" width="2" height="2" fill="#000"/><rect x="3" y="7" width="2" height="2" fill="#9a9ac0"/><rect x="3" y="10" width="2" height="2" fill="#000"/><rect x="6" y="5" width="4" height="1" fill="#7676a6"/><rect x="6" y="8" width="4" height="1" fill="#7676a6"/><rect x="6" y="11" width="4" height="1" fill="#7676a6"/></svg>
<div class="r" style="left:291px;top:446px;color:#000;letter-spacing:0.048px">Always use custom logon background</div>
<div class="r" style="left:619px;top:446px;width:100px;text-align:center;color:#000;letter-spacing:0.15px">Not configured</div>
<div class="a" style="left:269px;top:502px;width:520px;height:17px;background:#fff;border-top:1px solid #c8c8c8;border-bottom:1px solid #c8c8c8"></div>
<div class="a" style="left:269px;top:502px;width:17px;height:17px;border:1px solid #c8c8c8;background:#fff"></div>
<svg style="left:269px;top:502px" width="17" height="17" viewBox="0 0 17 17"><path d="M10 5 L6.5 8.5 L10 12" fill="none" stroke="#505050" stroke-width="1.5"/></svg>
<div class="a" style="left:772px;top:502px;width:17px;height:17px;border:1px solid #c8c8c8;background:#fff"></div>
<svg style="left:772px;top:502px" width="17" height="17" viewBox="0 0 17 17"><path d="M7 5 L10.5 8.5 L7 12" fill="none" stroke="#505050" stroke-width="1.5"/></svg>
<div class="a" style="left:286px;top:502px;width:389px;height:17px;border:1px solid #a0a0a0;background:#dadada"></div>
<div class="a" style="left:476px;top:507px;width:2px;height:7px;background:#606060"></div>
<div class="a" style="left:479px;top:507px;width:2px;height:7px;background:#606060"></div>
<div class="a" style="left:482px;top:507px;width:2px;height:7px;background:#606060"></div>
<div class="a" style="left:269px;top:421px;width:451px;height:28px;border:2px solid #f00;border-radius:13px"></div>
<svg style="left:0;top:0" width="795" height="568" viewBox="0 0 795 568" shape-rendering="crispEdges">
<path d="M267 521 L276 539 H331 L340 521 Z" fill="#f0f0f0"/>
<path d="M267.5 521.5 L275.5 538.5" stroke="#484848" stroke-width="1" fill="none"/>
<path d="M331.5 538.5 L336 529.5" stroke="#484848" stroke-width="1" fill="none"/>
<path d="M332 521 L341 539 H393 L402 521 Z" fill="#fff"/>
<path d="M332.5 521.5 L341 538.5" stroke="#484848" stroke-width="1" fill="none"/>
<path d="M393.5 538.5 L401.5 521.5" stroke="#484848" stroke-width="1" fill="none"/>
<rect x="267" y="521" width="66" height="1" fill="#6a6e76"/>
<rect x="401" y="521" width="390" height="1" fill="#6a6e76"/>
<rect x="267" y="539" width="524" height="1" fill="#a0a0a0"/>
</svg>
<div class="a" style="left:267px;top:520px;width:524px;height:1px;background:#5a5e66"></div>
<div class="t" style="left:279px;top:522px;letter-spacing:-0.3px">Extended</div>
<div class="t" style="left:343px;top:522px">Standard</div>
<div class="a" style="left:6px;top:540px;width:785px;height:23px;background:#fff;border:1px solid #a8a8a8;border-left-color:#b8b0a8"></div>
<div class="a" style="left:570px;top:541px;width:1px;height:21px;background:#d8d8d8"></div>
<div class="a" style="left:703px;top:541px;width:1px;height:21px;background:#d8d8d8"></div>
<div class="a" style="left:788px;top:543px;width:1px;height:19px;background:#d8d8d8"></div>
<div class="a" style="left:374px;top:565px;width:235px;height:6px;background:#58b0cc;border:1px solid #264e5a"></div>
</body></html>
